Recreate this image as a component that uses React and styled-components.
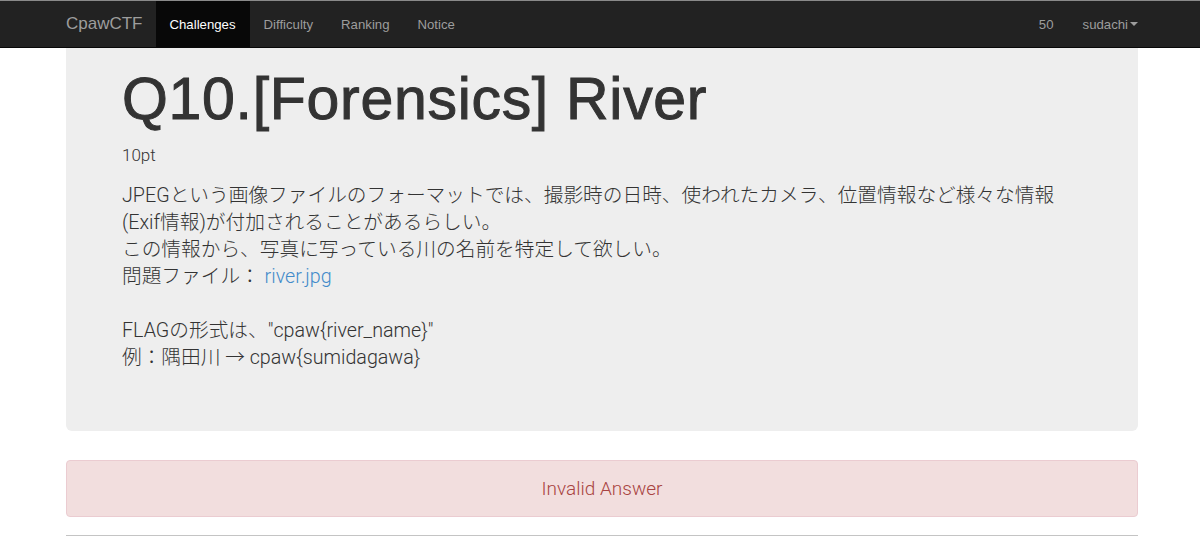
import React from 'react';
import styled, { createGlobalStyle } from 'styled-components';

const GlobalStyle = createGlobalStyle`
    html, body {
        margin: 0;
        padding: 0;
        background: #fff;
    }
    body {
        font-family: 'Roboto', 'Noto Sans CJK JP', sans-serif;
        font-weight: 300;
        color: #333;
    }
`;

const App = () => {
    return (
        <>
            <GlobalStyle />
            <Navbar>
                <NavInner>
                    <Brand>CpawCTF</Brand>
                    <NavLink $active>Challenges</NavLink>
                    <NavLink>Difficulty</NavLink>
                    <NavLink>Ranking</NavLink>
                    <NavLink>Notice</NavLink>
                    <NavRight>
                        <NavLink>50</NavLink>
                        <NavLink>
                            sudachi<Caret />
                        </NavLink>
                    </NavRight>
                </NavInner>
            </Navbar>
            <Container>
                <Jumbotron>
                    <Title>Q10.[Forensics] River</Title>
                    <Points>10pt</Points>
                    <Lead>
                        JPEGという画像ファイルのフォーマットでは、撮影時の日時、使われたカメラ、位置情報など様々な情報
                        <br />
                        (Exif情報)が付加されることがあるらしい。
                        <br />
                        この情報から、写真に写っている川の名前を特定して欲しい。
                        <br />
                        問題ファイル： <FileLink>river.jpg</FileLink>
                        <br />
                        <br />
                        FLAGの形式は、"cpaw{'{'}river_name{'}'}"
                        <br />
                        例：隅田川 → cpaw{'{'}sumidagawa{'}'}
                    </Lead>
                </Jumbotron>
                <Alert>Invalid Answer</Alert>
                <Panel />
            </Container>
        </>
    );
};

var Navbar = styled.nav`
    height: 46px;
    background: #222;
    border-top: 1px solid #8a8a8a;
    border-bottom: 1px solid #080808;
`;

// the page sits 2px right of centre, like the scrolled layout it comes from
var NavInner = styled.div`
    width: 1072px;
    margin-left: calc(50% - 534px);
    height: 100%;
    display: flex;
    align-items: stretch;
`;

var Brand = styled.a`
    display: flex;
    align-items: center;
    padding-right: 13px;
    font-family: 'Liberation Sans', sans-serif;
    font-size: 17px;
    font-weight: 400;
    color: #9d9d9d;
`;

var NavLink = styled.a`
    display: flex;
    align-items: center;
    padding: 0 14px;
    font-family: 'Liberation Sans', sans-serif;
    font-size: 13.2px;
    color: ${(p) => (p.$active ? '#fff' : '#9d9d9d')};
    background: ${(p) => (p.$active ? '#080808' : 'transparent')};
`;

var NavRight = styled.div`
    display: flex;
    margin-left: auto;
    margin-right: -14px;

    & > a + a {
        margin-left: 1px;
    }
`;

var Caret = styled.span`
    display: inline-block;
    margin-left: 2px;
    width: 0;
    height: 0;
    border-top: 4px solid #9d9d9d;
    border-left: 4px solid transparent;
    border-right: 4px solid transparent;
`;

var Container = styled.main`
    width: 1072px;
    margin-left: calc(50% - 534px);
`;

var Jumbotron = styled.section`
    background: #eee;
    border-radius: 0 0 6px 6px;
    padding: 19px 56px 45px;
    height: 383px;
    box-sizing: border-box;
`;

var Title = styled.h1`
    margin: 0;
    font-family: 'Liberation Sans', sans-serif;
    font-size: 59px;
    font-weight: 400;
    line-height: 65px;
    letter-spacing: 0.7px;
    -webkit-text-stroke: 1px #333;
    color: #333;
`;

var Points = styled.div`
    margin-top: 11px;
    font-size: 17px;
    line-height: 24px;
`;

var Lead = styled.p`
    margin: 15px 0 0;
    font-size: 19.7px;
    line-height: 27px;
`;

var FileLink = styled.a`
    color: #428bca;
`;

var Alert = styled.div`
    margin-top: 29px;
    height: 57px;
    box-sizing: border-box;
    display: flex;
    align-items: center;
    justify-content: center;
    background: #f2dede;
    border: 1px solid #ebccd1;
    border-radius: 4px;
    color: #a94442;
    font-size: 19px;
`;

var Panel = styled.div`
    margin-top: 18px;
    border-top: 1px solid #c4c4c4;
    box-shadow: 0 -6px 16px rgba(0, 0, 0, 0.03);
`;

export default App;
